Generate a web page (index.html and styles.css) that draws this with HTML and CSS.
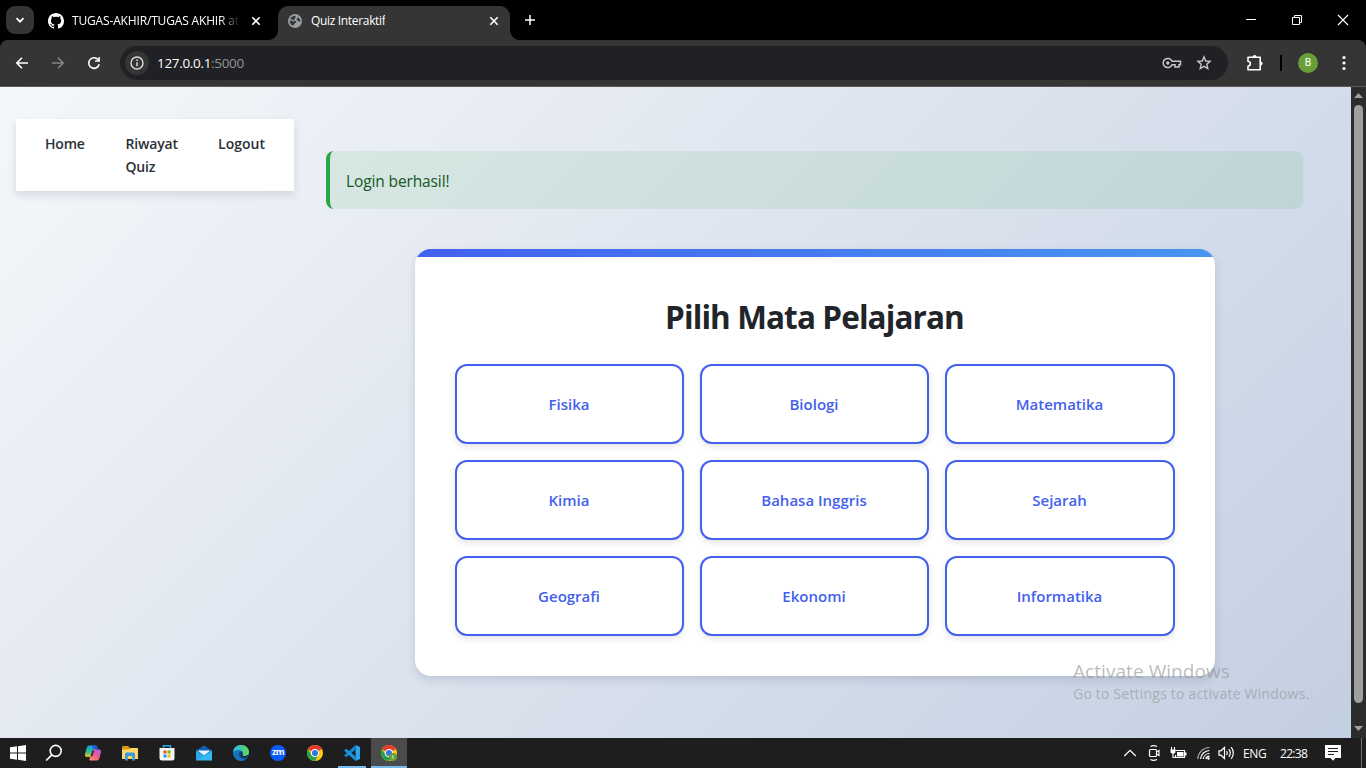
FILE: index.html
```html
<!DOCTYPE html>
<html lang="id">
<head>
<meta charset="utf-8">
<title>Quiz Interaktif</title>
<link rel="stylesheet" href="styles.css">
</head>
<body>
<div class="screen">
  <header class="tabstrip">
    <div class="tab-search"><svg width="10" height="10" viewBox="0 0 10 10"><path d="M1.500 3.200 5 6.700 8.500 3.200" fill="none" stroke="#fff" stroke-width="1.700"/></svg></div>
    <div class="tab tab-idle">
      <svg class="tab-icon" width="16" height="16" viewBox="0 0 16 16"><path fill="#fff" d="M8 0C3.580 0 0 3.580 0 8c0 3.540 2.290 6.530 5.470 7.590.4.070.55-.17.55-.38 0-.19-.01-.82-.01-1.490-2.010.37-2.530-.49-2.690-.94-.09-.23-.48-.94-.82-1.130-.28-.15-.68-.52-.01-.53.63-.01 1.080.58 1.230.82.72 1.210 1.870.87 2.330.66.07-.52.28-.87.51-1.070-1.780-.2-3.640-.89-3.640-3.950 0-.87.31-1.590.82-2.150-.08-.2-.36-1.020.08-2.120 0 0 .67-.21 2.200.82.64-.18 1.320-.27 2-.27s1.360.09 2 .27c1.530-1.040 2.200-.82 2.200-.82.44 1.100.16 1.920.08 2.120.51.56.82 1.270.82 2.150 0 3.070-1.870 3.750-3.650 3.950.29.25.54.73.54 1.480 0 1.070-.01 1.930-.01 2.200 0 .21.15.46.55.38A8.010 8.010 0 0 0 16 8c0-4.420-3.580-8-8-8z"/></svg>
      <span class="tab-title tab-title-faded">TUGAS-AKHIR/TUGAS AKHIR at</span>
      <svg class="tab-close" width="10" height="10" viewBox="0 0 10 10"><path d="M1.300 1.300 8.700 8.700M8.700 1.300 1.300 8.700" stroke="#fff" stroke-width="1.600"/></svg>
    </div>
    <div class="tab tab-active">
      <svg class="tab-icon" width="14" height="14" viewBox="0 0 14 14"><circle cx="7" cy="7" r="7" fill="#9aa0a6"/><path d="M7.400 1.800C5 1.700 3 3 2 5.200 3.500 5.100 4.600 5.300 5.400 6.100c.9.900 2.500.3 2.800 1.500.3 1.300-1.400 1.300-1.700 2.300-.3.900-1.300 1.300-2.300 1.500C2.500 10.200 1.600 8.500 1.800 6.400c2.600-.1 3 1 4.200 1.100M7.400 1.800c-.9.900-.6 1.700.5 1.900M10 3.200c1.500.9 2.300 2.300 2.400 4.200-1 .7-2.100.3-2.500-.8-1.100-.2-1.600-.7-1.400-1.500.8-.3 1.200-.9 1.500-1.900z" fill="#353535"/></svg>
      <span class="tab-title tab-title-short">Quiz Interaktif</span>
      <svg class="tab-close" width="10" height="10" viewBox="0 0 10 10"><path d="M1.300 1.300 8.700 8.700M8.700 1.300 1.300 8.700" stroke="#fff" stroke-width="1.600"/></svg>
    </div>
    <svg class="new-tab" width="12" height="12" viewBox="0 0 12 12"><path d="M1 6h10M6 1v10" stroke="#fff" stroke-width="1.500"/></svg>
    <div class="window-buttons">
      <svg width="12" height="12" viewBox="0 0 12 12"><path d="M1 5.500h10" stroke="#fff"/></svg>
      <svg width="12" height="12" viewBox="0 0 12 12"><path d="M1.500 3.500h7v7h-7zM3.500 3.500v-2h7v7h-2" fill="none" stroke="#fff"/></svg>
      <svg width="12" height="12" viewBox="0 0 12 12"><path d="M1 1l10 10M11 1 1 11" stroke="#fff" stroke-width="1.200"/></svg>
    </div>
  </header>

  <div class="toolbar">
    <div class="nav-buttons">
      <svg width="16" height="16" viewBox="0 0 16 16"><path d="M14 8H3M8 2.800 2.800 8 8 13.200" fill="none" stroke="#fff" stroke-width="1.600"/></svg>
      <svg width="16" height="16" viewBox="0 0 16 16"><path d="M2 8h11M8 2.800 13.200 8 8 13.200" fill="none" stroke="#868686" stroke-width="1.600"/></svg>
      <svg width="16" height="16" viewBox="0 0 16 16"><path d="M13.200 9.200A5.300 5.300 0 1 1 12 4.500l1.300 1.300" fill="none" stroke="#fff" stroke-width="1.600"/><path d="M13.900 2v4.800H9.100V5.300h3.300V2z" fill="#fff"/></svg>
    </div>
    <div class="omnibox">
      <div class="site-info"><svg width="14" height="14" viewBox="0 0 14 14"><circle cx="7" cy="7" r="6" fill="none" stroke="#dcdcdc" stroke-width="1.400"/><path d="M7 6.200v4M7 3.600v1.500" stroke="#dcdcdc" stroke-width="1.500"/></svg></div>
      <span class="url">127.0.0.1<span class="url-port">:5000</span></span>
      <svg class="key" width="20" height="12" viewBox="0 0 20 12"><path d="M10 4.300A4.600 4.600 0 1 0 10 7.700H13V10H17V7.700H18.500V4.300z" fill="none" stroke="#c7c7c7" stroke-width="1.500"/><circle cx="5.800" cy="6" r="1.700" fill="#c7c7c7"/></svg>
      <svg class="star" width="16" height="16" viewBox="0 0 16 16"><path d="M8 1.900 9.700 6l4.400.4-3.300 2.900 1 4.300L8 11.300l-3.800 2.300 1-4.300L1.900 6.400 6.300 6z" fill="none" stroke="#c7c7c7" stroke-width="1.400"/></svg>
    </div>
    <svg class="puzzle" width="18" height="18" viewBox="0 0 18 18"><path d="M2 3.200H14.200V15.800H2V12.200C5.100 11.600 5.100 7.800 2 7.200z" fill="none" stroke="#fff" stroke-width="1.600" stroke-linejoin="round"/><path d="M6.600 3A2 2 0 0 1 10.600 3zM14.500 7.400a2 2 0 0 1 0 4.200z" fill="#fff"/></svg>
    <span class="toolbar-divider"></span>
    <span class="avatar">B</span>
    <svg class="menu-dots" width="4" height="16" viewBox="0 0 4 16"><g fill="#fff"><circle cx="2" cy="2.500" r="1.600"/><circle cx="2" cy="8" r="1.600"/><circle cx="2" cy="13.500" r="1.600"/></g></svg>
  </div>

  <div class="viewport">
    <div class="page">
      <nav class="navbar">
        <a class="nav-link nav-home">Home</a>
        <a class="nav-link nav-history">Riwayat Quiz</a>
        <a class="nav-link nav-logout">Logout</a>
      </nav>
      <main class="content">
        <div class="alert"><span class="alert-text">Login berhasil!</span></div>
        <section class="card">
          <h1 class="card-title">Pilih Mata Pelajaran</h1>
          <div class="subjects">
            <a class="subject">Fisika</a>
            <a class="subject">Biologi</a>
            <a class="subject">Matematika</a>
            <a class="subject">Kimia</a>
            <a class="subject">Bahasa Inggris</a>
            <a class="subject">Sejarah</a>
            <a class="subject">Geografi</a>
            <a class="subject">Ekonomi</a>
            <a class="subject">Informatika</a>
          </div>
        </section>
      </main>
    </div>
    <div class="scrollbar">
      <svg width="9" height="5" viewBox="0 0 9 5"><path d="M4.500 0 9 5H0z" fill="#9f9f9f"/></svg>
      <span class="thumb"></span>
      <svg width="9" height="5" viewBox="0 0 9 5"><path d="M4.500 5 9 0H0z" fill="#9f9f9f"/></svg>
    </div>
  </div>

  <footer class="taskbar">
    <div class="task task-start"><svg width="16" height="16" viewBox="0 0 16 16"><path d="M0 2.300 7 1.300V7.500H0zM8 1.200 16 0V7.500H8zM0 8.500H7V14.700L0 13.700zM8 8.500H16V16L8 14.800z" fill="#fff"/></svg></div>
    <div class="task task-search"><svg width="18" height="18" viewBox="0 0 18 18"><circle cx="10.700" cy="6.900" r="5.500" fill="none" stroke="#fff" stroke-width="1.600"/><path d="M6.800 10.900 1.200 16.500" stroke="#fff" stroke-width="1.700"/></svg></div>
    <div class="task"><svg width="18" height="16" viewBox="0 0 18 16">
      <defs><linearGradient id="ca" x1="0" y1="0" x2="0" y2="1"><stop offset="0" stop-color="#1a9cf0"/><stop offset=".5" stop-color="#28b98c"/><stop offset="1" stop-color="#e8c22b"/></linearGradient><linearGradient id="cb" x1="1" y1="0" x2="0" y2="1"><stop offset="0" stop-color="#a45be8"/><stop offset=".5" stop-color="#ef5b8e"/><stop offset="1" stop-color="#ffa05a"/></linearGradient></defs>
      <path d="M5 .5h6.500q1.500 0 1 1.500l-2.600 8q-.6 2-2.500 2H3Q.3 12 1 9L2.600 3Q3.300.5 5 .5z" fill="url(#ca)"/><path d="M8.200.5h3.500q1.500 0 2.300 3l.4 1H11Q9 4.500 8.200 2z" fill="#2457d8"/><path d="M10.500 4.500H15q2.500 0 1.900 3L15.400 13q-.7 2.500-2.400 2.500H6.500q-1.500 0-1-1.500l2.500-8q.5-1.500 2.500-1.500z" fill="url(#cb)"/><path d="M8.500 5.500h1.800l-2 6H6.500z" fill="#1b2a46"/></svg></div>
    <div class="task"><svg width="18" height="16" viewBox="0 0 18 16"><path d="M1 2.500Q1 1 2.300 1H7l2 2h7q1 0 1 1v10H1z" fill="#dd9612"/><path d="M1 4.500h7L9.500 3H17v11H1z" fill="#ffd667"/><path d="M4 15.500V9q0-1.500 1.500-1.500h7Q14 7.500 14 9v6.500h-2.800V11H6.800v4.500z" fill="#3798e3"/></svg></div>
    <div class="task"><svg width="16" height="18" viewBox="0 0 16 18"><path d="M4.500 5V1.700h7V5" fill="none" stroke="#24a8e7" stroke-width="1.400"/><path d="M.5 4h15v10q0 2.500-2.500 2.500H3Q.5 16.500.5 14z" fill="#f5f5f5"/><path d="M4.500 6.500h3v3h-3z" fill="#ef5022"/><path d="M8.500 6.500h3v3h-3z" fill="#7eb802"/><path d="M4.500 10.500h3v3h-3z" fill="#16a2ec"/><path d="M8.500 10.500h3v3h-3z" fill="#fdb809"/></svg></div>
    <div class="task"><svg width="16" height="16" viewBox="0 0 16 16"><path d="M0 5.500 8 .5l8 5v4H0z" fill="#0c5fb3"/><path d="M1.500 5.500h13L8 10.500z" fill="#e9f5fd"/><path d="M0 5.500 9 11 0 15.500z" fill="#28a9ea"/><path d="M16 5.500V15.500H0z" fill="#35b8f1"/></svg></div>
    <div class="task"><svg width="18" height="18" viewBox="0 0 18 18"><defs><linearGradient id="ea" x1="0" y1="0" x2="1" y2="0"><stop offset="0" stop-color="#2eb4ea"/><stop offset="1" stop-color="#61db55"/></linearGradient></defs><circle cx="9" cy="9" r="8" fill="#1673bf"/><path d="M1 8C1.500 3.500 4.800 1 9 1c5 0 8 3.600 8 7 0 2.800-2 4-4.500 4-2 0-2.800-.8-2-1.800C12 7.500 7 3.500 1 8z" fill="url(#ea)"/><path d="M10.500 10.200c-.8 1 0 1.800 2 1.800 1.700 0 3-.4 4-1.500-.5 1.500-1.500 3.200-2.800 4.200-4 .6-6.800-1.500-6.700-4.200 0-1.800 1-2.900 2.200-3.200 1.500.5 2.100 1.900 1.300 2.900z" fill="#123f73"/><path d="M10.500 10.200c-.8 1 0 1.800 2 1.800 1.700 0 3-.4 4-1.500l-.6 1.700c-3 1.500-6.400.7-6.500-1.700z" fill="#1e1e1e"/></svg></div>
    <div class="task"><span class="zoom-logo">zm</span></div>
    <div class="task"><svg width="16" height="16" viewBox="0 0 16 16"><circle cx="8" cy="8" r="8" fill="#fdc913"/><path d="M8 8 1.070 4A8 8 0 0 1 14.930 4z" fill="#e33b2e"/><path d="M1.070 4A8 8 0 0 0 8 16l3.500-6L8 8 4.500 10z" fill="#2aa14a"/><path d="M1.070 4H8v4z" fill="#e33b2e"/><circle cx="8" cy="8" r="4" fill="#fff"/><circle cx="8" cy="8" r="3.100" fill="#3478e5"/></svg></div>
    <div class="task task-open"><svg width="18" height="18" viewBox="0 0 18 18"><path d="M12.500 1 17 3v12l-4.500 2z" fill="#29a6ee"/><path d="M12.500 1v4.500L3.300 13.200 1 11.500z" fill="#1684ce"/><path d="M12.500 17v-4.500L3.300 4.800 1 6.500z" fill="#1793dc"/></svg></div>
    <div class="task task-open task-current"><svg width="18" height="18" viewBox="-1 -1 18 18"><circle cx="8" cy="8" r="8" fill="#fdc913"/><path d="M8 8 1.070 4A8 8 0 0 1 14.930 4z" fill="#e33b2e"/><path d="M1.070 4A8 8 0 0 0 8 16l3.500-6L8 8 4.500 10z" fill="#2aa14a"/><path d="M1.070 4H8v4z" fill="#e33b2e"/><circle cx="8" cy="8" r="4" fill="#fff"/><circle cx="8" cy="8" r="3.100" fill="#3478e5"/><circle cx="12" cy="12" r="4" fill="#689f38"/><path d="M10.800 10.200h2v3.500h-2z" fill="#a8cc88"/></svg></div>
    <div class="tray">
      <svg class="tray-caret" width="14" height="8" viewBox="0 0 14 8"><path d="M1.300 7 7 1.300 12.700 7" fill="none" stroke="#fff" stroke-width="1.200"/></svg>
      <svg class="tray-camera" width="12" height="18" viewBox="0 0 12 18"><rect x="1.500" y="5.500" width="7" height="7" rx="1" fill="none" stroke="#fff" stroke-width="1.200"/><path d="M8.500 8 11 6.500v5L8.500 10M2.500 2.500Q5.500.8 9 2.500M2.500 15.500q3 1.700 6.500 0" fill="none" stroke="#fff" stroke-width="1.100"/></svg>
      <svg class="tray-battery" width="17" height="13" viewBox="0 0 17 13"><path d="M5.500 3.500h9v7h-9V8" fill="none" stroke="#fff" stroke-width="1.200"/><path d="M7 5h6.500v4.500H7zM15 5.500h1.500v3H15zM.5 2.500h5v3q-2.500 2.500-5 0z" fill="#fff"/><path d="M1.500 0v3M4.500 0v3M3 6v4.500h2.500" fill="none" stroke="#fff" stroke-width="1.100"/></svg>
      <svg width="13" height="14" viewBox="0 0 13 14"><path d="M.8 13A12 12 0 0 1 12.500 1.500" fill="none" stroke="#aaa" stroke-width="1.200"/><path d="M3.500 13A9.300 9.300 0 0 1 12.500 4.500M6.200 13A6.500 6.500 0 0 1 12.500 7.500M8.800 13a4 4 0 0 1 3.700-2.800" fill="none" stroke="#fff" stroke-width="1.200"/><circle cx="11.500" cy="12.500" r="1.200" fill="#fff"/></svg>
      <svg width="17" height="14" viewBox="0 0 17 14"><path d="M1 4.800h2L6.500 1.500v11L3 9.200H1zM8.500 5q1.600 2 0 4M10.800 3.200q3 3.800 0 7.600M13.200 1.200q4.200 5.800 0 11.600" fill="none" stroke="#fff" stroke-width="1.200"/></svg>
      <span class="lang">ENG</span>
      <span class="clock">22:38</span>
      <svg width="16" height="16" viewBox="0 0 16 16"><path d="M0 0h16v13h-5.500L8 15.800 5.500 13H0z" fill="#fff"/><path d="M3 3.500h10M3 6.500h10M3 9.500h6" stroke="#1e1e1e"/></svg>
      <span class="show-desktop"></span>
    </div>
  </footer>

  <div class="watermark">
    <div class="watermark-title">Activate Windows</div>
    <div class="watermark-text">Go to Settings to activate Windows.</div>
  </div>
</div>
</body>
</html>
```
FILE: styles.css
```css
* { box-sizing: border-box; }
body { margin: 0; font-family: "Open Sans", "Noto Sans", sans-serif; overflow: hidden; }
svg { display: block; flex: none; }
.screen { position: relative; width: 1366px; height: 768px; display: flex; flex-direction: column; overflow: hidden; background: #000; }

.tabstrip { height: 40px; background: #000; display: flex; align-items: center; flex: none; }
.tab-search { width: 28px; height: 28px; margin-left: 6px; border-radius: 9px; background: #353535; display: grid; place-items: center; }
.tab { width: 232px; height: 34px; display: flex; align-items: center; padding: 0 11px 5px 10px; margin: 6px 0 0 4px; color: #fff; font-size: 12px; line-height: 16px; }
.tab-idle { padding-right: 9px; }
.tab-active { position: relative; background: #353535; border-radius: 10px 10px 0 0; margin-left: 8px; }
.tab-active::before, .tab-active::after { content: ""; position: absolute; bottom: 0; width: 10px; height: 10px; }
.tab-active::before { left: -10px; background: radial-gradient(circle at 0 0, #000 9.500px, #353535 10.500px); }
.tab-active::after { right: -10px; background: radial-gradient(circle at 100% 0, #000 9.500px, #353535 10.500px); }
.tab-title { white-space: nowrap; overflow: hidden; }
.tab-title-faded { width: 168px; margin-left: 8px; letter-spacing: -0.160px; -webkit-mask-image: linear-gradient(90deg, #000 88%, transparent); mask-image: linear-gradient(90deg, #000 88%, transparent); }
.tab-title-short { margin-left: 9px; letter-spacing: -0.330px; }
.tab-close { margin-left: auto; }
.new-tab { margin-left: 14px; }
.window-buttons { margin-left: auto; padding-right: 17px; display: flex; gap: 34px; }

.toolbar { height: 47px; flex: none; background: #353535; border-bottom: 1px solid #5a5a5a; border-radius: 8px 8px 0 0; display: flex; align-items: center; }
.nav-buttons { display: flex; gap: 20px; margin-left: 14px; }
.omnibox { width: 1108px; height: 34px; margin-left: 18px; border-radius: 17px; background: #202124; display: flex; align-items: center; padding: 0 16px 0 5px; }
.site-info { width: 24px; height: 24px; border-radius: 50%; background: #353535; display: grid; place-items: center; }
.url { margin-left: 8px; font-size: 13.500px; letter-spacing: -0.320px; color: #fff; }
.url-port { color: #949494; }
.key { margin-left: auto; }
.star { margin-left: 14px; }
.puzzle { margin-left: 18px; }
.toolbar-divider { width: 2px; height: 16px; background: #000; margin-left: 16px; }
.avatar { width: 20px; height: 20px; margin-left: 16px; border-radius: 50%; background: #689f38; color: #fff; font: 10.500px/20px Roboto, sans-serif; text-align: center; }
.menu-dots { margin-left: 24px; }

.viewport { height: 651px; flex: none; display: flex; }
.page { width: 1351px; height: 651px; display: flex; align-items: flex-start; background: linear-gradient(135deg, #f5f7fa 0%, #c3cfe2 100%); }
.navbar { width: 278px; height: 72px; margin: 32px 0 0 16px; padding: 13px 29px; background: #fff; display: flex; box-shadow: 0 4px 8px rgba(40, 50, 90, .14); color: #2b3035; font-size: 14px; font-weight: 600; line-height: 23px; }
.nav-link { letter-spacing: -0.200px; }
.nav-home { width: 81px; }
.nav-history { width: 60px; margin-right: 33px; letter-spacing: -0.150px; }
.nav-logout { letter-spacing: 0; }
.content { width: 977px; margin: 64px 0 0 32px; display: flex; flex-direction: column; align-items: center; }
.alert { width: 977px; height: 58px; border-left: 4px solid #28a745; border-radius: 8px; background: rgba(40, 167, 69, .1); color: #155724; padding: 17px 16px; font-size: 15.500px; line-height: 26px; }
.alert-text { letter-spacing: -0.120px; }
.card { width: 800px; height: 427px; margin-top: 40px; padding: 39px 40px 0; background: linear-gradient(90deg, #4361ee, #4895ef) top / 100% 8px no-repeat #fff; border-radius: 16px; box-shadow: 0 4px 8px rgba(30, 45, 80, .14); }
.card-title { margin: 8px 0 26px; color: #212529; font-size: 31.500px; font-weight: 700; line-height: 42px; text-align: center; letter-spacing: -0.900px; }
.subjects { display: grid; grid-template-columns: 229px 229px 230px; grid-auto-rows: 80px; gap: 16px; }
.subject { display: grid; place-items: center; border: 2px solid #4361ee; border-radius: 12px; background: #fff; box-shadow: 0 3px 6px rgba(0, 0, 0, .1); color: #4361ee; font-size: 15px; font-weight: 600; }
.scrollbar { width: 15px; background: #2c2c2c; display: flex; flex-direction: column; align-items: center; padding: 6px 0 7px; justify-content: space-between; }
.thumb { width: 9px; height: 598px; margin-bottom: 16px; border-radius: 5px; background: #9f9f9f; }

.taskbar { height: 30px; flex: none; background: #1e1e1e; display: flex; }
.task { width: 36px; height: 30px; margin-right: 1px; display: grid; place-items: center; }
.task-start { margin-right: 0; }
.task-search { margin-right: 3px; }
.zoom-logo { width: 16px; height: 16px; border-radius: 50%; background: #0b5cff; color: #fff; font: 700 9px/14px "Open Sans", sans-serif; text-align: center; letter-spacing: -0.500px; }
.task-open { position: relative; }
.task-open::after { content: ""; position: absolute; left: 4px; right: 4px; bottom: 0; height: 2px; background: #76b9ed; }
.task-current { background: #4b4b4b; }
.task-current::after { left: 0; right: 0; }
.tray { margin-left: auto; display: flex; align-items: center; color: #fff; font-size: 12px; }
.tray > svg { margin-right: 8px; }
.tray > .tray-caret { margin-right: 11px; }
.tray > .tray-camera, .tray > .tray-battery { margin-right: 10px; }
.lang { width: 26px; letter-spacing: -0.300px; margin-right: 11px; }
.clock { width: 32px; letter-spacing: -0.700px; margin-right: 13px; }
.show-desktop { width: 5px; height: 30px; border-left: 1px solid #707070; margin-left: 12px; }

.watermark { position: absolute; left: 1073px; top: 660px; color: rgba(150, 150, 150, .65); white-space: nowrap; }
.watermark-title { font-size: 19px; line-height: 23px; letter-spacing: 0.060px; }
.watermark-text { font-size: 14px; line-height: 22px; letter-spacing: 0.200px; }
```
